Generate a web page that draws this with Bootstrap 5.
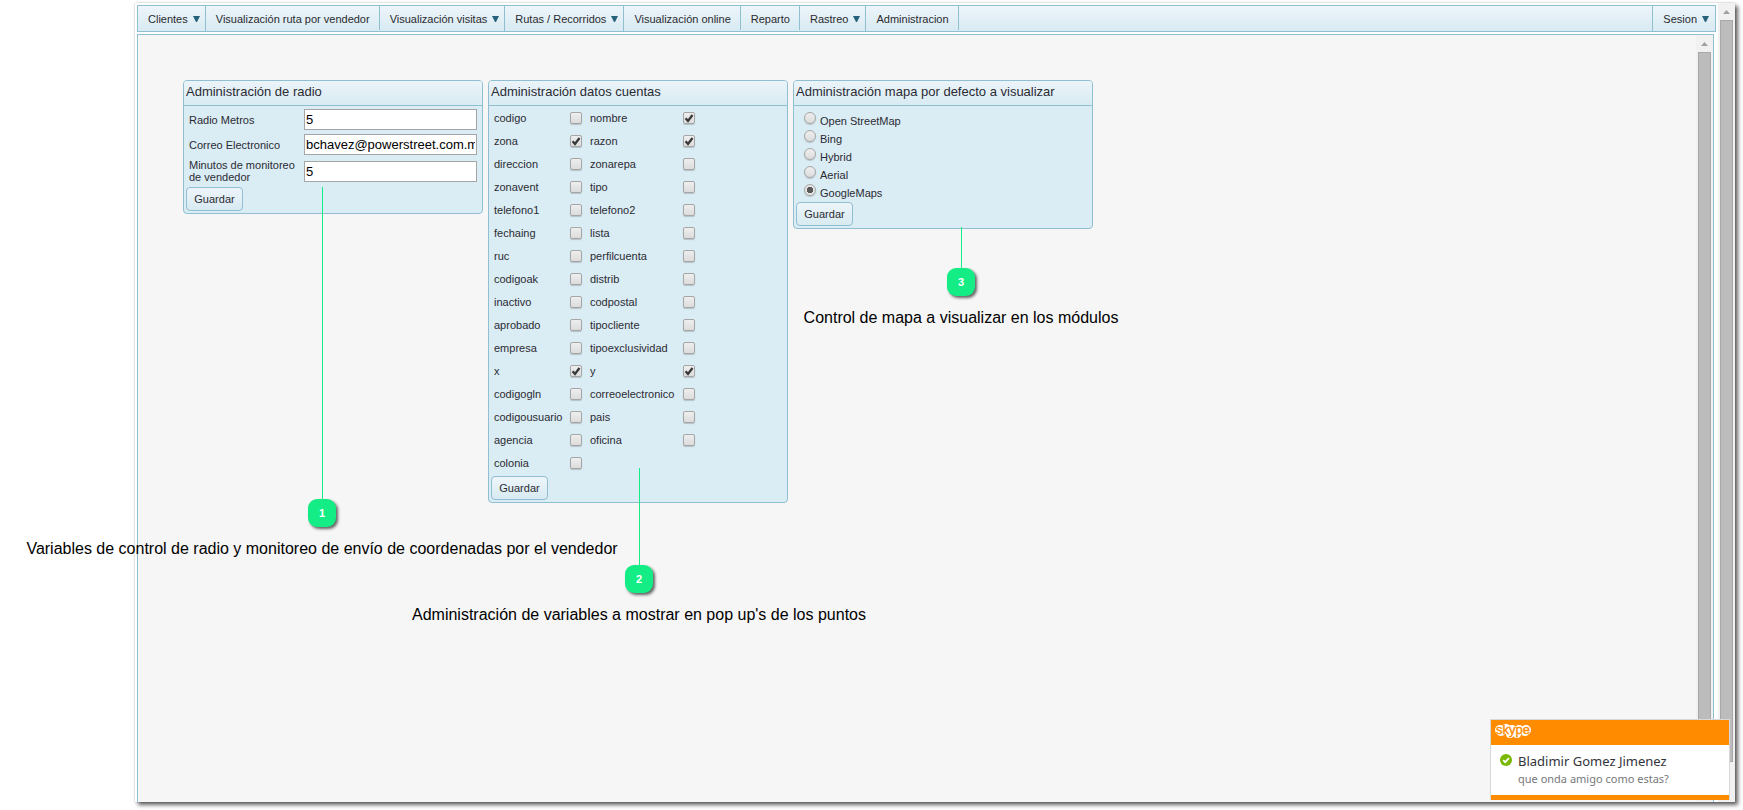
<!DOCTYPE html>
<html lang="es">
<head>
<meta charset="utf-8">
<meta name="viewport" content="width=device-width, initial-scale=1">
<title>Administracion</title>
<link href="https://cdn.jsdelivr.net/npm/bootstrap@5.3.0/dist/css/bootstrap.min.css" rel="stylesheet">
<style>
  :root { --line: #90bfd2; --pane: #daecf4; --ink: #2b2b33; --pin: #14ec85; --hot: #ff8c00; }
  body { font-family: "Liberation Sans", Arial, sans-serif; font-size: 11px; line-height: 12px; color: var(--ink); background: #fff; }
  .stage { min-height: 100vh; padding: 3px 8px 8px 135px; }
  .app-window { background: #fff; box-shadow: 0 0 2px rgba(0,0,0,.25), 3px 3px 4px rgba(0,0,0,.6); }
  .app-page { padding: 2px 2px 0 2px; min-width: 0; }

  .menu-bar { border: 1px solid var(--line); background: linear-gradient(#edf5fa, #d8eaf2); min-height: 27px; align-items: stretch; }
  .menu-entry { display: flex; align-items: center; height: 24px; padding: 1px 9px 0 10px; font-size: 11px; line-height: 12px; color: #2a2a30; text-decoration: none; white-space: nowrap; background: none; border: 0; border-right: 1px solid var(--line); border-radius: 0; }
  .menu-drop { height: 25px; padding: 0 5px 0 10px; gap: 5px; }
  .menu-last { border-left: 1px solid var(--line); border-right: 0; padding-right: 6px; }
  .menu-entry svg { width: 7px; height: 6px; fill: #26617c; }

  .workspace { margin: 2px 2px 0 0; border: 1px solid var(--line); border-bottom: 0; background: #f6f6f6; }
  .panes { padding: 45px; gap: 5px; }

  .pane { position: relative; width: 300px; border: 1px solid var(--line); border-radius: 4px; background: var(--pane); }
  .pane-title { margin: 0; height: 25px; padding: 3px 2px; font-size: 13px; line-height: 16px; font-weight: 400; border-bottom: 1px solid var(--line); border-radius: 3px 3px 0 0; background: linear-gradient(#ebf4f9, #d9ebf3); }
  .pane-button { display: block; width: 57px; height: 24px; padding: 0; margin: 0 2px 2px; font-size: 11px; line-height: 12px; color: var(--ink); border: 1px solid var(--line); border-radius: 4px; background: linear-gradient(#edf5fa, #d8eaf2); }

  .radio-form { padding: 3px 5px 4px; gap: 4px; }
  .radio-form > div { min-height: 21px; }
  .radio-form label { width: 115px; padding-right: 5px; }
  .radio-form input { flex: 1; min-width: 0; height: 21px; padding: 0 1px; font-size: 13px; line-height: 17px; color: #000; background: #fff; border: 1px solid #a5a5a5; border-radius: 0; }

  .field-grid { display: grid; grid-template-columns: 76px 20px 93px 20px; grid-auto-rows: 23px; align-items: center; padding: 0 5px 2px; }
  .map-list { padding: 3px 10px; }
  .map-list > div { height: 18px; gap: 4px; }
  .map-list label { padding-top: 6px; }

  .tick { appearance: none; display: block; width: 12px; height: 12px; margin: 0; border: 1px solid #a6a6a6; border-radius: 2px; background: linear-gradient(#eee, #dcdcdc); box-shadow: 0 1px 1px rgba(0,0,0,.18); }
  .tick:checked { background: url("data:image/svg+xml,%3Csvg xmlns='http://www.w3.org/2000/svg' viewBox='0 0 10 10'%3E%3Cpath d='M1.6 5.3 4 8 8.5 2' fill='none' stroke='%23383838' stroke-width='2.3'/%3E%3C/svg%3E") center / 10px no-repeat, linear-gradient(#eee, #dcdcdc); }
  .tick-round { border-radius: 50%; margin-top: 3px; }
  .tick-round:checked { background: radial-gradient(circle, #5a5a5a 0 3px, #e6e6e6 3px); }

  .callout { position: absolute; z-index: 5; width: 0; display: flex; flex-direction: column; align-items: center; color: #000; pointer-events: none; }
  .callout-line { width: 1px; background: var(--pin); }
  .callout-pin { flex: none; width: 28px; height: 28px; border-radius: 9px; background: var(--pin); color: #fff; font-size: 11px; font-weight: 700; line-height: 28px; text-align: center; box-shadow: 2px 2px 3px rgba(0,0,0,.6); }
  .callout-text { margin-top: 12px; font-size: 16px; line-height: 20px; white-space: nowrap; }
  .at-radio { left: 138px; top: 106px; }
  .at-radio .callout-line { height: 312px; }
  .at-fields { left: 150px; top: 387px; }
  .at-fields .callout-line { height: 97px; }
  .at-map { left: 167px; top: 146px; }
  .at-map .callout-line { height: 41px; }

  .scroll-rail { flex: none; width: 17px; padding: 0 2px; background: #f1f1f1; }
  .scroll-rail svg { height: 17px; width: 13px; fill: #a0a0a0; flex: none; }
  .scroll-grip { flex: 1; background: #bcbcbc; border: 1px solid #a8a8a8; }
  .rail-gap { height: 40px; }

  .toast-note { position: fixed; right: 13px; bottom: 10px; z-index: 10; width: 240px; border: 1px solid #d8d8d8; background: #fff; border-bottom: 0; font-family: "Noto Sans", sans-serif; }
  .toast-head { height: 25px; padding: 3px 4px; background: var(--hot); }
  .toast-main { padding: 7px 8px 8px 9px; gap: 6px; height: 50px; }
  .toast-main svg { flex: none; margin-top: 2px; }
  .toast-name { font-size: 13px; line-height: 18px; color: #33333b; white-space: nowrap; }
  .toast-text { font-size: 11px; line-height: 17px; color: #77777c; white-space: nowrap; }
  .toast-foot { height: 5px; background: var(--hot); }
</style>
</head>
<body>
<div class="stage d-flex">
  <div class="app-window d-flex flex-grow-1">
    <div class="app-page d-flex flex-column flex-grow-1">
      <nav class="menu-bar d-flex" aria-label="Principal">
        <button type="button" class="menu-entry menu-drop">Clientes <svg viewBox="0 0 7 6"><path d="M0 0h7L4 6H3z"/></svg></button>
        <a href="#" class="menu-entry">Visualización ruta por vendedor</a>
        <button type="button" class="menu-entry menu-drop">Visualización visitas <svg viewBox="0 0 7 6"><path d="M0 0h7L4 6H3z"/></svg></button>
        <button type="button" class="menu-entry menu-drop">Rutas / Recorridos <svg viewBox="0 0 7 6"><path d="M0 0h7L4 6H3z"/></svg></button>
        <a href="#" class="menu-entry">Visualización online</a>
        <a href="#" class="menu-entry">Reparto</a>
        <button type="button" class="menu-entry menu-drop">Rastreo <svg viewBox="0 0 7 6"><path d="M0 0h7L4 6H3z"/></svg></button>
        <a href="#" class="menu-entry">Administracion</a>
        <button type="button" class="menu-entry menu-drop menu-last ms-auto">Sesion <svg viewBox="0 0 7 6"><path d="M0 0h7L4 6H3z"/></svg></button>
      </nav>

      <main class="workspace d-flex flex-grow-1">
        <div class="panes d-flex flex-wrap flex-grow-1 align-items-start">
          <section class="pane">
            <h2 class="pane-title">Administración de radio</h2>
            <form>
              <div class="radio-form d-flex flex-column">
                <div class="d-flex align-items-center"><label for="metros">Radio Metros</label><input id="metros" type="text" value="5"></div>
                <div class="d-flex align-items-center"><label for="correo">Correo Electronico</label><input id="correo" type="text" value="bchavez@powerstreet.com.mx"></div>
                <div class="d-flex align-items-center"><label for="minutos">Minutos de monitoreo de vendedor</label><input id="minutos" type="text" value="5"></div>
              </div>
              <button type="button" class="pane-button">Guardar</button>
            </form>
            <div class="callout at-radio"><span class="callout-line"></span><span class="callout-pin">1</span><span class="callout-text">Variables de control de radio y monitoreo de envío de coordenadas por el vendedor</span></div>
          </section>

          <section class="pane">
            <h2 class="pane-title">Administración datos cuentas</h2>
            <form>
              <div class="field-grid">
                <label for="codigo">codigo</label><input class="tick" type="checkbox" id="codigo">
                <label for="nombre">nombre</label><input class="tick" type="checkbox" id="nombre" checked>
                <label for="zona">zona</label><input class="tick" type="checkbox" id="zona" checked>
                <label for="razon">razon</label><input class="tick" type="checkbox" id="razon" checked>
                <label for="direccion">direccion</label><input class="tick" type="checkbox" id="direccion">
                <label for="zonarepa">zonarepa</label><input class="tick" type="checkbox" id="zonarepa">
                <label for="zonavent">zonavent</label><input class="tick" type="checkbox" id="zonavent">
                <label for="tipo">tipo</label><input class="tick" type="checkbox" id="tipo">
                <label for="telefono1">telefono1</label><input class="tick" type="checkbox" id="telefono1">
                <label for="telefono2">telefono2</label><input class="tick" type="checkbox" id="telefono2">
                <label for="fechaing">fechaing</label><input class="tick" type="checkbox" id="fechaing">
                <label for="lista">lista</label><input class="tick" type="checkbox" id="lista">
                <label for="ruc">ruc</label><input class="tick" type="checkbox" id="ruc">
                <label for="perfilcuenta">perfilcuenta</label><input class="tick" type="checkbox" id="perfilcuenta">
                <label for="codigoak">codigoak</label><input class="tick" type="checkbox" id="codigoak">
                <label for="distrib">distrib</label><input class="tick" type="checkbox" id="distrib">
                <label for="inactivo">inactivo</label><input class="tick" type="checkbox" id="inactivo">
                <label for="codpostal">codpostal</label><input class="tick" type="checkbox" id="codpostal">
                <label for="aprobado">aprobado</label><input class="tick" type="checkbox" id="aprobado">
                <label for="tipocliente">tipocliente</label><input class="tick" type="checkbox" id="tipocliente">
                <label for="empresa">empresa</label><input class="tick" type="checkbox" id="empresa">
                <label for="tipoexclusividad">tipoexclusividad</label><input class="tick" type="checkbox" id="tipoexclusividad">
                <label for="x">x</label><input class="tick" type="checkbox" id="x" checked>
                <label for="y">y</label><input class="tick" type="checkbox" id="y" checked>
                <label for="codigogln">codigogln</label><input class="tick" type="checkbox" id="codigogln">
                <label for="correoelectronico">correoelectronico</label><input class="tick" type="checkbox" id="correoelectronico">
                <label for="codigousuario">codigousuario</label><input class="tick" type="checkbox" id="codigousuario">
                <label for="pais">pais</label><input class="tick" type="checkbox" id="pais">
                <label for="agencia">agencia</label><input class="tick" type="checkbox" id="agencia">
                <label for="oficina">oficina</label><input class="tick" type="checkbox" id="oficina">
                <label for="colonia">colonia</label><input class="tick" type="checkbox" id="colonia">
              </div>
              <button type="button" class="pane-button">Guardar</button>
            </form>
            <div class="callout at-fields"><span class="callout-line"></span><span class="callout-pin">2</span><span class="callout-text">Administración de variables a mostrar en pop up's de los puntos</span></div>
          </section>

          <section class="pane">
            <h2 class="pane-title">Administración mapa por defecto a visualizar</h2>
            <form>
              <div class="map-list">
                <div class="d-flex align-items-start"><input class="tick tick-round" type="radio" name="mapa" id="osm"><label for="osm">Open StreetMap</label></div>
                <div class="d-flex align-items-start"><input class="tick tick-round" type="radio" name="mapa" id="bing"><label for="bing">Bing</label></div>
                <div class="d-flex align-items-start"><input class="tick tick-round" type="radio" name="mapa" id="hybrid"><label for="hybrid">Hybrid</label></div>
                <div class="d-flex align-items-start"><input class="tick tick-round" type="radio" name="mapa" id="aerial"><label for="aerial">Aerial</label></div>
                <div class="d-flex align-items-start"><input class="tick tick-round" type="radio" name="mapa" id="google" checked><label for="google">GoogleMaps</label></div>
              </div>
              <button type="button" class="pane-button">Guardar</button>
            </form>
            <div class="callout at-map"><span class="callout-line"></span><span class="callout-pin">3</span><span class="callout-text">Control de mapa a visualizar en los módulos</span></div>
          </section>
        </div>
        <div class="scroll-rail d-flex flex-column" aria-hidden="true">
          <svg viewBox="0 0 13 17"><path d="M3 11h7L6.500 7z"/></svg>
          <div class="scroll-grip"></div>
          <div class="rail-gap"></div>
        </div>
      </main>
    </div>
    <div class="scroll-rail d-flex flex-column" aria-hidden="true">
      <svg viewBox="0 0 13 17"><path d="M3 11h7L6.500 7z"/></svg>
      <div class="scroll-grip"></div>
      <div class="rail-gap"></div>
    </div>
  </div>
</div>

<aside class="toast-note">
  <div class="toast-head">
    <svg class="d-block" width="36" height="18" viewBox="0 0 36 18" role="img" aria-label="skype">
      <g fill="#fff"><circle cx="5" cy="7" r="5"/><circle cx="11" cy="6" r="5"/><circle cx="17" cy="7" r="5"/><circle cx="24" cy="7" r="5"/><circle cx="31" cy="7" r="5"/><circle cx="6" cy="9" r="4"/><circle cx="15" cy="11" r="4"/><circle cx="22" cy="11" r="4"/><circle cx="30" cy="9" r="4"/></g>
      <text x="18" y="11" text-anchor="middle" font-family="Liberation Sans, Arial, sans-serif" font-size="13" fill="#ff8c00" stroke="#ff8c00" stroke-width=".4">skype</text>
    </svg>
  </div>
  <div class="toast-main d-flex">
    <svg width="12" height="12" viewBox="0 0 12 12"><circle cx="6" cy="6" r="6" fill="#7ab800"/><path d="M3.200 6.200 5.200 8.200 8.900 4.200" fill="none" stroke="#fff" stroke-width="1.800"/></svg>
    <div>
      <div class="toast-name">Bladimir Gomez Jimenez</div>
      <div class="toast-text">que onda amigo como estas?</div>
    </div>
  </div>
  <div class="toast-foot"></div>
</aside>
<script src="https://cdn.jsdelivr.net/npm/bootstrap@5.3.0/dist/js/bootstrap.bundle.min.js"></script>
</body>
</html>
